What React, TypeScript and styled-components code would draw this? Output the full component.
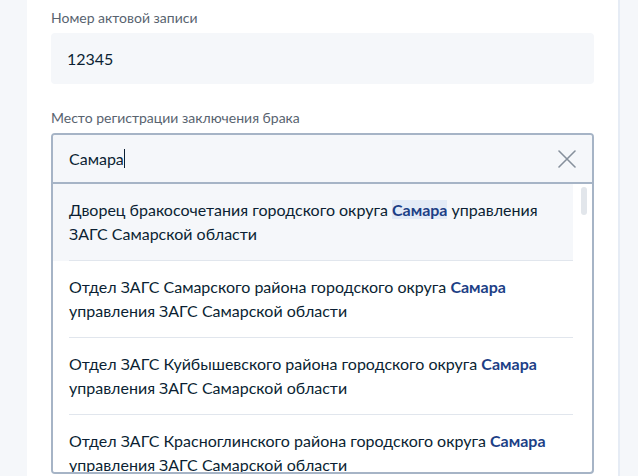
import React from 'react'
import styled, { createGlobalStyle } from 'styled-components'

const GlobalStyle = createGlobalStyle`
  *, *::before, *::after {
    box-sizing: border-box;
  }
  html, body {
    margin: 0;
    padding: 0;
    background: #f5f7fa;
    font-family: Lato, 'Open Sans', sans-serif;
    color: #0b1f33;
  }
`

const options = [
  ['Дворец бракосочетания городского округа ', 'Самара', ' управления ЗАГС Самарской области'],
  ['Отдел ЗАГС Самарского района городского округа ', 'Самара', ' управления ЗАГС Самарской области'],
  ['Отдел ЗАГС Куйбышевского района городского округа ', 'Самара', ' управления ЗАГС Самарской области'],
  ['Отдел ЗАГС Красноглинского района городского округа ', 'Самара', ' управления ЗАГС Самарской области'],
]

function CloseIcon() {
  return (
    <svg width="18" height="18" viewBox="0 0 18 18" fill="none">
      <path d="M1 1L17 17M17 1L1 17" stroke="#86909c" strokeWidth="1.6" strokeLinecap="round" />
    </svg>
  )
}

export default function App() {
  return (
    <Page>
      <GlobalStyle />
      <Card>
        <Field>
          <Label>Номер актовой записи</Label>
          <PlainInput>12345</PlainInput>
        </Field>
        <Field>
          <Label>Место регистрации заключения брака</Label>
          <Combo>
            <ComboInput>
              <Typed>
                Самара<Caret />
              </Typed>
              <ClearButton>
                <CloseIcon />
              </ClearButton>
            </ComboInput>
            <List>
              {options.map((o, i) => (
                <Option key={i} active={i === 0}>
                  {o[0]}
                  <Match active={i === 0}>{o[1]}</Match>
                  {o[2]}
                </Option>
              ))}
              <Thumb />
            </List>
          </Combo>
        </Field>
      </Card>
    </Page>
  )
}

const Page = styled.div`
  display: flex;
  height: 476px;
  padding-left: 27px;
  overflow: hidden;
`

const Card = styled.div`
  width: 593px;
  flex-shrink: 0;
  background: #fff;
  border-right: 2px solid #e6ecf5;
  padding: 8px 24px 0;
  display: flex;
  flex-direction: column;
  gap: 24px;
`

const Field = styled.div`
  display: flex;
  flex-direction: column;
`

const Label = styled.div`
  font-size: 14px;
  line-height: 20px;
  color: #58636f;
  margin-bottom: 5px;
`

const PlainInput = styled.div`
  height: 51px;
  background: #f5f7fa;
  border-radius: 4px;
  padding: 0 16px;
  display: flex;
  align-items: center;
  font-size: 16px;
`

const Combo = styled.div`
  border: 2px solid #a6b4c6;
  border-radius: 4px;
  background: #fff;
  overflow: hidden;
`

const ComboInput = styled.div`
  height: 49px;
  background: #f5f7fa;
  border-bottom: 2px solid #a6b4c6;
  display: flex;
  align-items: center;
  justify-content: space-between;
  padding: 0 16px;
`

const Typed = styled.div`
  font-size: 16px;
  display: flex;
  align-items: center;
`

const Caret = styled.span`
  display: inline-block;
  width: 1px;
  height: 19px;
  background: #0b1f33;
`

const ClearButton = styled.div`
  display: flex;
  width: 18px;
  height: 18px;
`

const List = styled.div`
  position: relative;
  height: 288px;
  overflow: hidden;
  padding-right: 19px;
`

const Option = styled.div<{ active?: boolean }>`
  position: relative;
  padding: 14px 16px 15px;
  font-size: 16px;
  line-height: 24px;
  background: ${p => (p.active ? '#f5f7fa' : '#fff')};

  &::after {
    content: '';
    position: absolute;
    left: 16px;
    right: 0;
    bottom: 0;
    height: 1px;
    background: #e1e6ed;
  }
`

const Match = styled.span<{ active?: boolean }>`
  font-weight: 700;
  color: #1d3f86;
  background: ${p => (p.active ? '#e3ebf7' : 'transparent')};
`

const Thumb = styled.div`
  position: absolute;
  top: 3px;
  right: 5px;
  width: 6px;
  height: 28px;
  border-radius: 3px;
  background: #e2e6eb;
`
